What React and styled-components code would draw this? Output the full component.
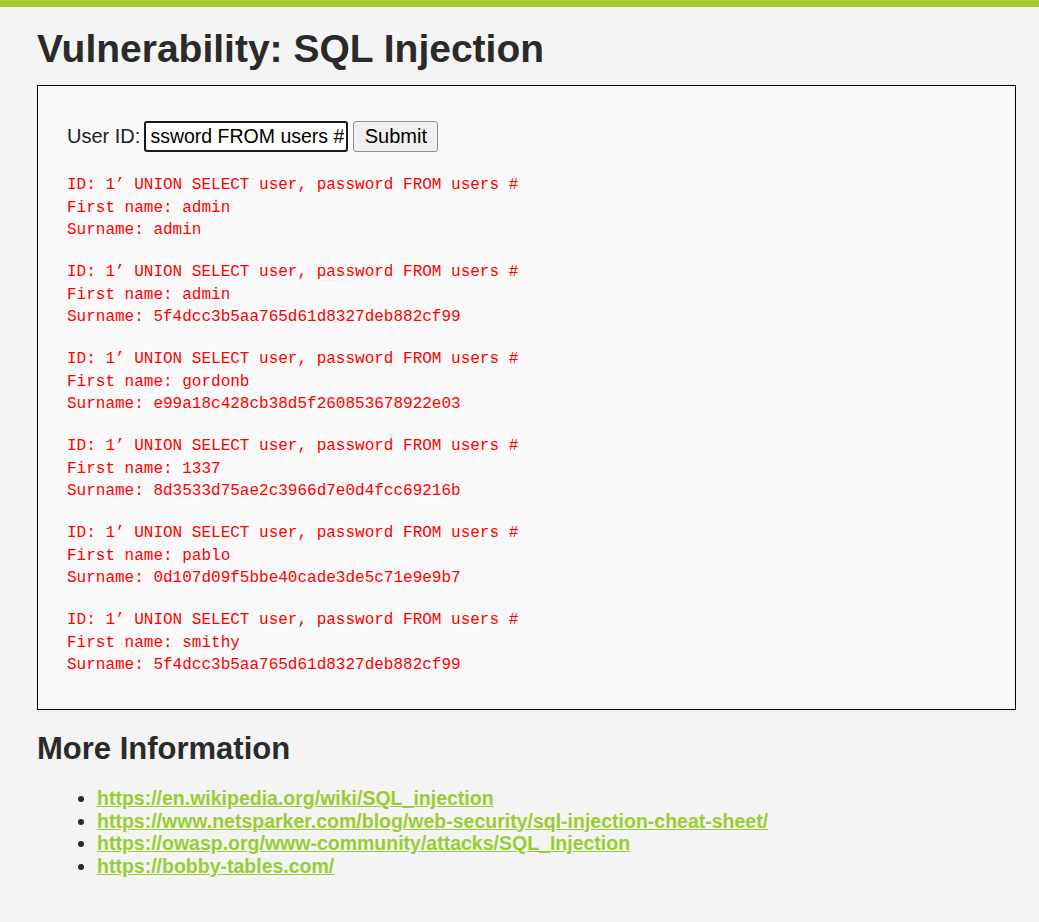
import React from "react";
import styled, { createGlobalStyle } from "styled-components";

const GlobalStyle = createGlobalStyle`
    html, body {
        margin: 0;
        padding: 0;
        background: #f4f4f4;
    }
    body {
        font-family: "Liberation Sans", Arial, sans-serif;
        color: #2a2a2a;
    }
`;

const results = [
    { first: "admin", surname: "admin" },
    { first: "admin", surname: "5f4dcc3b5aa765d61d8327deb882cf99" },
    { first: "gordonb", surname: "e99a18c428cb38d5f260853678922e03" },
    { first: "1337", surname: "8d3533d75ae2c3966d7e0d4fcc69216b" },
    { first: "pablo", surname: "0d107d09f5bbe40cade3de5c71e9e9b7" },
    { first: "smithy", surname: "5f4dcc3b5aa765d61d8327deb882cf99" },
];

const links = [
    "https://en.wikipedia.org/wiki/SQL_injection",
    "https://www.netsparker.com/blog/web-security/sql-injection-cheat-sheet/",
    "https://owasp.org/www-community/attacks/SQL_Injection",
    "https://bobby-tables.com/",
];

const App = () => {
    return (
        <>
            <GlobalStyle />
            <Page>
                <Title>Vulnerability: SQL Injection</Title>
                <CodeArea>
                    <Form onSubmit={(e) => e.preventDefault()}>
                        <Label>User ID:</Label>
                        <Input
                            type="text"
                            defaultValue="ssword FROM users #"
                        />
                        <Button type="submit">Submit</Button>
                    </Form>
                    {results.map((r, i) => (
                        <Result key={i}>
                            {"ID: 1’ UNION SELECT user, password FROM users #"}
                            <br />
                            {"First name: " + r.first}
                            <br />
                            {"Surname: " + r.surname}
                        </Result>
                    ))}
                </CodeArea>
                <SubTitle>More Information</SubTitle>
                <Links>
                    {links.map((l) => (
                        <li key={l}>
                            <a href={l}>{l}</a>
                        </li>
                    ))}
                </Links>
            </Page>
        </>
    );
};

const Page = styled.div`
    border-top: 7px solid #a4cc32;
    padding: 0 23px 30px 37px;
    min-height: 880px;
`;

const Title = styled.h1`
    margin: 0;
    padding: 20px 0 14px 0;
    font-size: 39px;
    line-height: 44px;
    font-weight: bold;
    color: #2a2a2a;
`;

const CodeArea = styled.div`
    border: 1px solid #000;
    background: #f8f9f8;
    padding: 35px 29px 13px 29px;
`;

const Form = styled.form`
    display: flex;
    align-items: center;
    gap: 5px;
    margin-bottom: 22px;
`;

const Label = styled.label`
    font-size: 20px;
    color: #222;
    margin-right: -1px;
`;

const Input = styled.input`
    width: 204px;
    height: 31px;
    box-sizing: border-box;
    border: 2px solid #1a1a1a;
    border-radius: 3px;
    padding: 0 2px;
    font-family: "Liberation Sans", Arial, sans-serif;
    font-size: 19.5px;
    color: #000;
    background: #fff;
    text-align: right;
    outline: none;
`;

const Button = styled.button`
    height: 31px;
    width: 85px;
    box-sizing: border-box;
    border: 1px solid #8f8f8f;
    border-radius: 3px;
    background: #efefef;
    font-family: "Liberation Sans", Arial, sans-serif;
    font-size: 20px;
    color: #000;
    padding: 0;
`;

const Result = styled.pre`
    margin: 0 0 19.5px 0;
    font-family: "Liberation Mono", "Courier New", monospace;
    font-size: 16px;
    line-height: 22.5px;
    color: #ff0000;
`;

const SubTitle = styled.h2`
    margin: 0;
    padding: 22px 0 21px 0;
    font-size: 31px;
    line-height: 34px;
    font-weight: bold;
    color: #2a2a2a;
`;

const Links = styled.ul`
    margin: 0;
    padding-left: 60px;
    li {
        font-size: 19.5px;
        line-height: 22.5px;
        color: #2a2a2a;
    }
    a {
        color: #99cc33;
        font-weight: bold;
        text-decoration: underline;
    }
`;

export default App;
